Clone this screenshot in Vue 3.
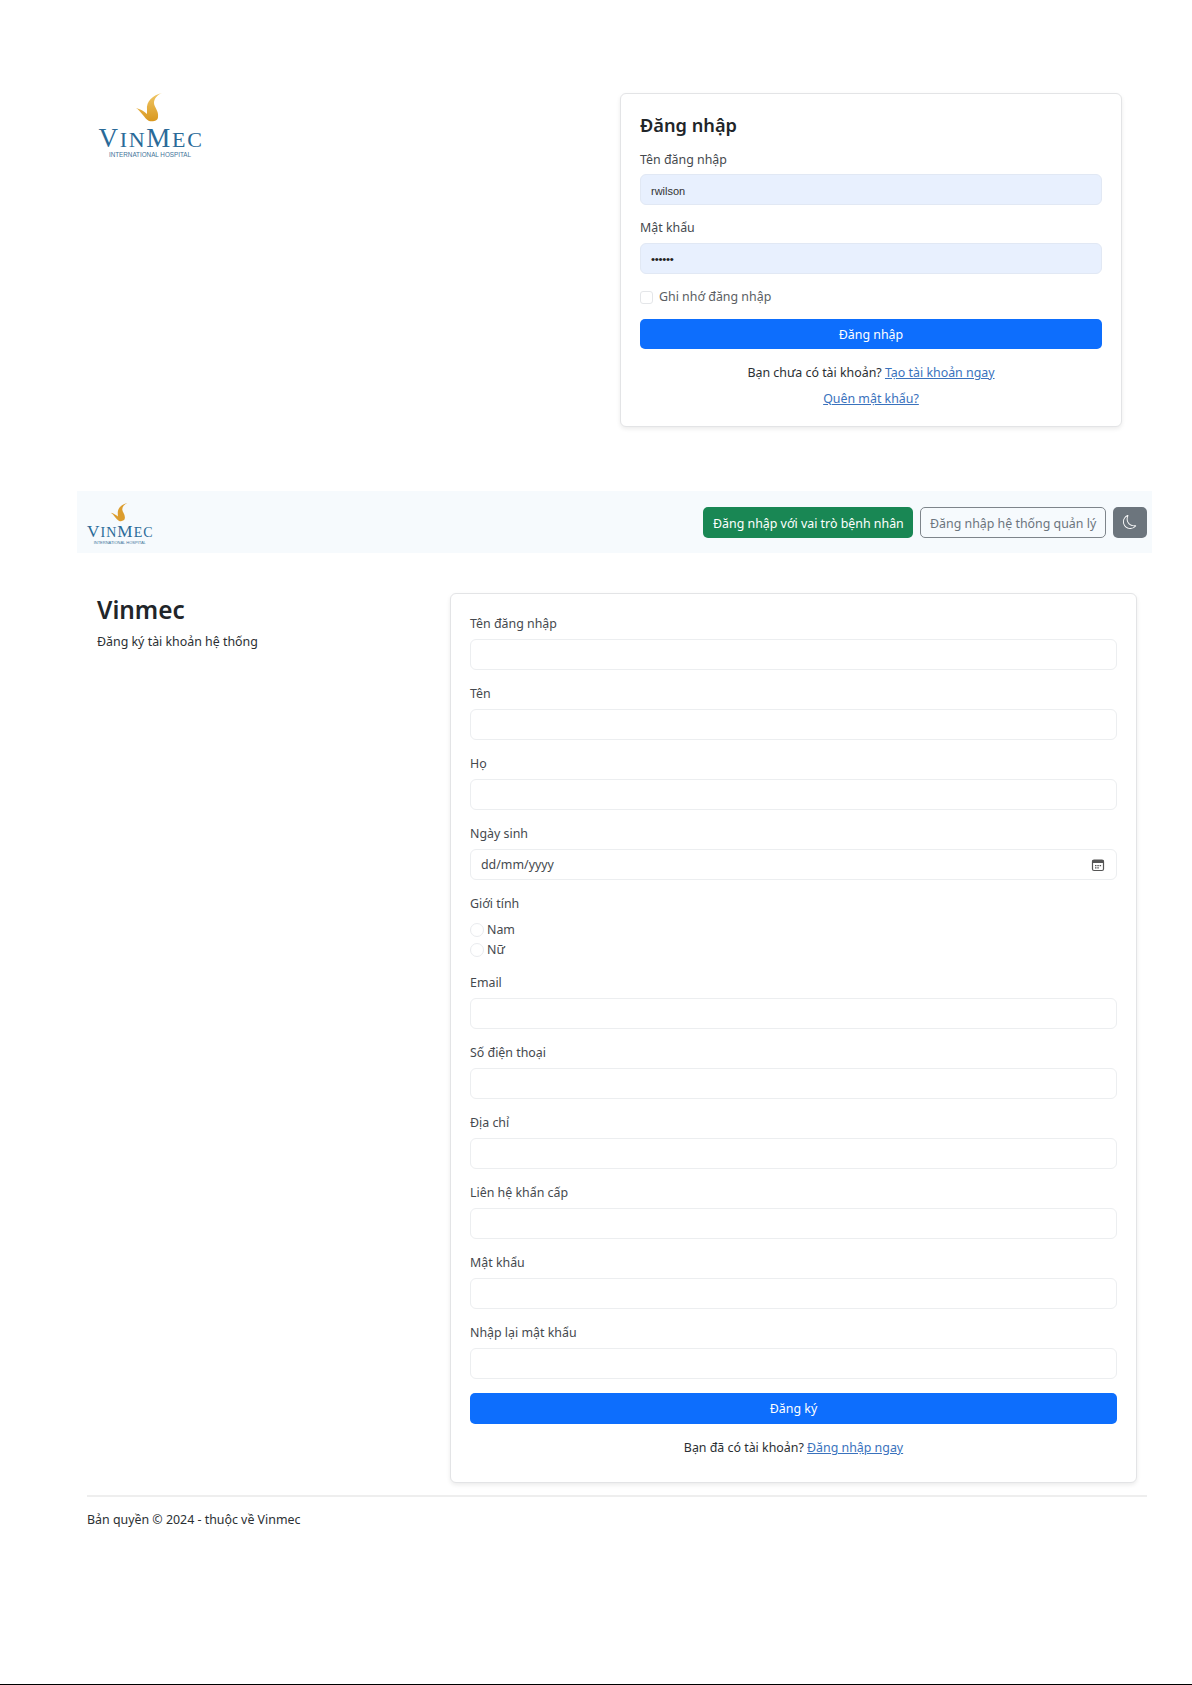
<script setup>
const fields = [
  { label: 'Tên đăng nhập' },
  { label: 'Tên' },
  { label: 'Họ' },
  { label: 'Ngày sinh', date: true },
  { label: 'Giới tính', radios: ['Nam', 'Nữ'] },
  { label: 'Email' },
  { label: 'Số điện thoại' },
  { label: 'Địa chỉ' },
  { label: 'Liên hệ khẩn cấp' },
  { label: 'Mật khẩu' },
  { label: 'Nhập lại mật khẩu' }
]
</script>

<template>
  <div class="page">
    <section class="login-row">
      <div class="login-logo">
        <svg class="logo" viewBox="0 0 110 72" width="110" height="72">
          <defs>
            <linearGradient id="flame" x1="0" y1="0" x2="0" y2="1">
              <stop offset="0" stop-color="#f0c766" />
              <stop offset="1" stop-color="#d9981f" />
            </linearGradient>
          </defs>
          <path fill="url(#flame)" d="M65 0C56 2 49 8 50 17L50 21C47 18 43 16 39 15C44 18 47 25 52 28C56 29 61 28 61 24C62 18 57 14 57 10C57 6 60 2 65 0Z" />
          <text x="54" y="54" text-anchor="middle" class="logo-name">V<tspan class="small">IN</tspan>M<tspan class="small">EC</tspan></text>
          <text x="53" y="64" text-anchor="middle" class="logo-sub">INTERNATIONAL HOSPITAL</text>
        </svg>
      </div>
      <div class="card login-card">
        <h5>Đăng nhập</h5>
        <label class="first">Tên đăng nhập</label>
        <div class="input filled arial">rwilson</div>
        <label class="second">Mật khẩu</label>
        <div class="input filled dots">••••••</div>
        <div class="check-row"><span class="check"></span><span class="muted">Ghi nhớ đăng nhập</span></div>
        <button class="btn primary">Đăng nhập</button>
        <p class="center first-line">Bạn chưa có tài khoản? <a>Tạo tài khoản ngay</a></p>
        <p class="center"><a>Quên mật khẩu?</a></p>
      </div>
    </section>

    <section class="shell">
      <nav class="navbar">
        <svg class="nav-logo" viewBox="0 0 110 72" width="70" height="46">
          <path fill="#dc9d2e" d="M65 0C56 2 49 8 50 17L50 21C47 18 43 16 39 15C44 18 47 25 52 28C56 29 61 28 61 24C62 18 57 14 57 10C57 6 60 2 65 0Z" />
          <text x="54" y="54" text-anchor="middle" class="logo-name">V<tspan class="small">IN</tspan>M<tspan class="small">EC</tspan></text>
          <text x="53" y="64" text-anchor="middle" class="logo-sub">INTERNATIONAL HOSPITAL</text>
        </svg>
        <div class="nav-actions">
          <button class="btn success">Đăng nhập với vai trò bệnh nhân</button>
          <button class="btn outline">Đăng nhập hệ thống quản lý</button>
          <button class="btn moon" aria-label="Chế độ tối">
            <svg viewBox="0 0 16 16" width="14" height="14" fill="#fff">
              <path d="M6 .278a.768.768 0 0 1 .08.858 7.208 7.208 0 0 0-.878 3.46c0 4.021 3.278 7.277 7.318 7.277.527 0 1.04-.055 1.533-.16a.787.787 0 0 1 .81.316.733.733 0 0 1-.031.893A8.349 8.349 0 0 1 8.344 16C3.734 16 0 12.286 0 7.71 0 4.266 2.114 1.312 5.124.06A.752.752 0 0 1 6 .278zM4.858 1.311A7.269 7.269 0 0 0 1.025 7.71c0 4.02 3.279 7.276 7.319 7.276a7.316 7.316 0 0 0 5.205-2.162c-.337.042-.68.063-1.029.063-4.61 0-8.343-3.714-8.343-8.29 0-1.167.242-2.278.681-3.286z" />
            </svg>
          </button>
        </div>
      </nav>

      <div class="register">
        <aside class="intro">
          <h3>Vinmec</h3>
          <p>Đăng ký tài khoản hệ thống</p>
        </aside>
        <div class="card reg-card">
          <div v-for="f in fields" :key="f.label" class="field" :class="{ 'radio-field': f.radios }">
            <label>{{ f.label }}</label>
            <template v-if="f.radios">
              <div v-for="r in f.radios" :key="r" class="radio-row"><span class="radio"></span>{{ r }}</div>
            </template>
            <div v-else class="input" :class="{ date: f.date }">
              <template v-if="f.date">
                <span>dd/mm/yyyy</span>
                <svg viewBox="0 0 14 14" width="14" height="14">
                  <rect x="1.5" y="2" width="11" height="10.5" rx="1.5" fill="none" stroke="#555" stroke-width="1.2" />
                  <rect x="1.5" y="2" width="11" height="3" fill="#555" />
                  <path d="M4 7h1.5v1.3H4zM6.3 7h1.5v1.3H6.3zM8.6 7h1.5v1.3H8.6zM4 9.3h1.5v1.3H4zM6.3 9.3h1.5v1.3H6.3z" fill="#555" />
                </svg>
              </template>
            </div>
          </div>
          <button class="btn primary">Đăng ký</button>
          <p class="center reg-foot">Bạn đã có tài khoản? <a>Đăng nhập ngay</a></p>
        </div>
      </div>

      <footer class="footer">Bản quyền © 2024 - thuộc về Vinmec</footer>
    </section>
    <div class="edge"></div>
  </div>
</template>

<style>
html, body { margin: 0; background: #fff; }
</style>

<style scoped>
.page {
  width: 1192px;
  height: 1685px;
  box-sizing: border-box;
  padding-top: 93px;
  position: relative;
  font-family: "Noto Sans", "Open Sans", sans-serif;
  font-size: 12.4px;
  line-height: 20px;
  color: #2b2f33;
  overflow: hidden;
}
.login-row {
  display: flex;
  justify-content: space-between;
  padding: 0 70px 0 97px;
}
.logo { display: block; }
.logo-name { font-family: "Liberation Serif", serif; font-size: 27px; fill: #2a6a98; letter-spacing: 1.7px; }
.logo-name .small { font-size: 22px; }
.logo-sub { font-family: "Liberation Sans", sans-serif; font-size: 6.3px; fill: #3f7499; }
.card {
  box-sizing: border-box;
  background: #fff;
  border: 1px solid #e3e4e6;
  border-radius: 6px;
  box-shadow: 0 2px 4px rgba(0, 0, 0, .08);
}
.login-card { width: 502px; height: 334px; padding: 18px 19px; }
h5 { margin: 0 0 12px; font-size: 18.2px; line-height: 26px; font-weight: 600; color: #212529; }
label { display: block; height: 20px; color: #45494e; margin-bottom: 5px; }
.login-card .first { margin-bottom: 4px; }
.login-card .second { margin-top: 13px; }
.input {
  box-sizing: border-box;
  height: 31px;
  border: 1px solid #eceef0;
  border-radius: 6px;
  background: #fff;
  padding: 0 10px;
  display: flex;
  align-items: center;
  justify-content: space-between;
  color: #45494e;
}
.date { padding-right: 11px; }
.filled { background: #e8f0fe; border-color: #e1e8f4; }
.arial { font-family: "Liberation Sans", sans-serif; font-size: 11px; color: #333; padding-top: 2px; }
.dots { font-family: "Liberation Sans", sans-serif; font-size: 11.5px; letter-spacing: -.3px; color: #222; }
.check-row { display: flex; align-items: center; gap: 6px; height: 20px; margin-top: 13px; }
.check { box-sizing: border-box; width: 13px; height: 13px; border: 1px solid #e4e6e9; border-radius: 3px; }
.muted { color: #5a5e63; }
.btn {
  display: block;
  box-sizing: border-box;
  height: 31px;
  border: 1px solid transparent;
  border-radius: 5px;
  font: inherit;
  padding: 1px 9px 0;
  white-space: nowrap;
}
.primary { width: 100%; background: #0d6efd; color: #fff; }
.login-card .primary { margin-top: 12px; height: 30px; }
.center { text-align: center; margin: 0; }
.first-line { margin-top: 14px; margin-bottom: 6px; }
a { color: #3a72bd; text-decoration: underline; }
.shell { margin: 64px 40px 0 77px; }
.navbar {
  height: 62px;
  background: #f6fafd;
  display: flex;
  align-items: center;
  justify-content: space-between;
  padding: 0 5px 0 9px;
}
.nav-logo { display: block; margin-top: 8px; }
.nav-actions { display: flex; gap: 7px; }
.success { background: #198754; color: #fff; width: 210px; padding-top: 3px; }
.outline { background: transparent; border-color: #7e858b; color: #6c757d; width: 186px; padding-top: 3px; }
.moon { background: #6c757d; width: 34px; padding: 0; display: flex; align-items: center; justify-content: center; }
.register { display: flex; justify-content: space-between; padding: 40px 15px 0 20px; }
.intro { width: 340px; padding-top: 1px; }
h3 { margin: 0; font-size: 24.4px; line-height: 32px; font-weight: 600; color: #212529; }
.intro p { margin: 4px 0 0; padding-top: 2px; }
.reg-card { width: 687px; height: 890px; padding: 20px 19px 19px; }
.field { height: 70px; }
.field label { margin-bottom: 5px; }
.radio-field { height: 79px; }
.radio-field label { margin-bottom: 5px; }
.radio-row { display: flex; align-items: center; gap: 0; height: 20px; color: #45494e; padding-top: 1px; box-sizing: border-box; }
.radio { box-sizing: border-box; width: 14px; height: 14px; border: 1px solid #e9ebee; border-radius: 50%; margin-right: 3px; }
.reg-foot { margin-top: 14px; }
.footer { margin: 12px 5px 0 10px; border-top: 2px solid #eeeeee; padding-top: 13px; }
.edge { position: absolute; left: 0; right: 0; bottom: 0; height: 1px; background: #000; }
</style>
